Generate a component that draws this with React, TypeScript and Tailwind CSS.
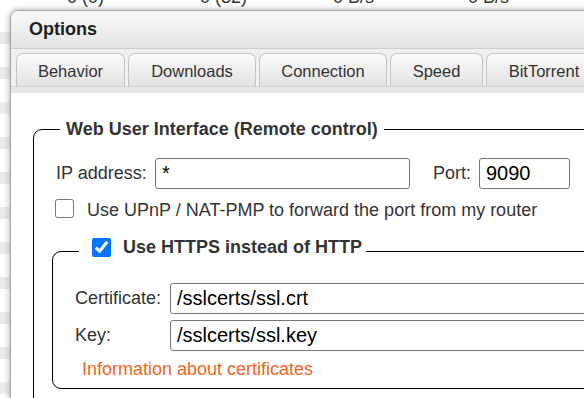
import React from 'react';

const tabs = [
  { label: 'Behavior', width: 'w-[109px]' },
  { label: 'Downloads', width: 'w-[128px]' },
  { label: 'Connection', width: 'w-[128px]' },
  { label: 'Speed', width: 'w-[93px]' },
  { label: 'BitTorrent', width: 'w-[116px]' },
];

const stripes = Array.from({ length: 11 });

function BackgroundList() {
  return (
    <div className="flex flex-col">
      {/* last visible row of the transfer list, cut off at the top */}
      <div className="-mt-[13px] h-[20px] flex items-center pl-[67px] text-[18px] leading-[20px] text-[#333]">
        <span className="w-[133px]">0 (0)</span>
        <span className="w-[133px]">0 (32)</span>
        <span className="w-[135px]">0 B/s</span>
        <span>0 B/s</span>
      </div>
      <div className="h-[25px]" />
      {stripes.map((_, i) => (
        <div key={i} className="flex flex-col">
          <div className="h-[12px] bg-[#ececec]" />
          <div className="h-[23px] bg-white" />
        </div>
      ))}
    </div>
  );
}

function TextInput({ value, className }: { value: string; className: string }) {
  return (
    <input
      readOnly
      defaultValue={value}
      className={`h-[31px] border border-[#767676] rounded-[3px] px-[6px] text-[20px] text-black bg-white outline-none ${className}`}
    />
  );
}

export default function App() {
  return (
    <div className="relative w-[584px] h-[398px] overflow-hidden bg-white font-['Liberation_Sans',Arial,sans-serif]">
      <BackgroundList />

      {/* Options window */}
      <div className="absolute left-[10px] top-[10px] w-[700px] h-[420px] rounded-tl-[8px] border border-[#a5a5a5] bg-white shadow-[0_0_6px_rgba(0,0,0,0.35)] overflow-hidden">
        <div className="h-[38px] flex items-center pl-[18px] bg-linear-to-b from-[#f8f8f8] to-[#e5e5e5] border-b border-[#cdcdcd] text-[18px] font-bold text-[#1e1e1e]">
          Options
        </div>

        <div className="bg-[#f0f0f0] pt-[4px] pl-[5px] flex gap-[3px]">
          {tabs.map((tab) => (
            <div
              key={tab.label}
              className={`${tab.width} shrink-0 h-[33px] pt-[2px] flex items-center justify-center rounded-t-[7px] border-x border-t border-[#c4c4c4] bg-linear-to-b from-[#fbfbfb] to-[#e2e2e2] text-[16.5px] text-[#333]`}
            >
              {tab.label}
            </div>
          ))}
        </div>
        <div className="h-[7px] bg-[#e6e6e6] border-t border-[#d2d2d2]" />

        <div className="pt-[23px] pl-[22px] pr-[22px]">
          <fieldset className="border border-black rounded-[9px] px-[18px] pb-[20px]">
            <legend className="ml-[8px] px-[6px] text-[18px] font-bold text-[#333]">
              Web User Interface (Remote control)
            </legend>

            <div className="mt-[15px] flex items-center">
              <span className="ml-[4px] w-[99px] text-[18px] text-[#333]">IP address:</span>
              <TextInput value="*" className="w-[255px]" />
              <span className="ml-[23px] w-[46px] text-[18px] text-[#333]">Port:</span>
              <TextInput value="9090" className="w-[91px]" />
            </div>

            <div className="mt-[10px] flex items-center h-[19px]">
              <input type="checkbox" className="ml-[3px] w-[19px] h-[19px]" />
              <span className="ml-[13px] pt-[4px] text-[18px] text-[#333]">
                Use UPnP / NAT-PMP to forward the port from my router
              </span>
            </div>

            <fieldset className="mt-[19px] border border-black rounded-[9px] px-[22px] pb-[8px]">
              <legend className="ml-[4px] px-[4px] pb-[7px]">
                <div className="flex items-center h-[21px]">
                  <input type="checkbox" defaultChecked className="ml-[9px] w-[19px] h-[19px] accent-[#0075ff]" />
                  <span className="ml-[12px] text-[18px] font-bold text-[#333]">Use HTTPS instead of HTTP</span>
                </div>
              </legend>

              <div className="mt-[18px] flex items-center">
                <span className="w-[95px] text-[18px] text-[#333]">Certificate:</span>
                <TextInput value="/sslcerts/ssl.crt" className="flex-1" />
              </div>
              <div className="mt-[6px] flex items-center">
                <span className="w-[95px] text-[18px] text-[#333]">Key:</span>
                <TextInput value="/sslcerts/ssl.key" className="flex-1" />
              </div>
              <div className="mt-[8px] ml-[7px] text-[18px] leading-[21px] text-[#f26522]">
                Information about certificates
              </div>
            </fieldset>
          </fieldset>
        </div>
      </div>
    </div>
  );
}
